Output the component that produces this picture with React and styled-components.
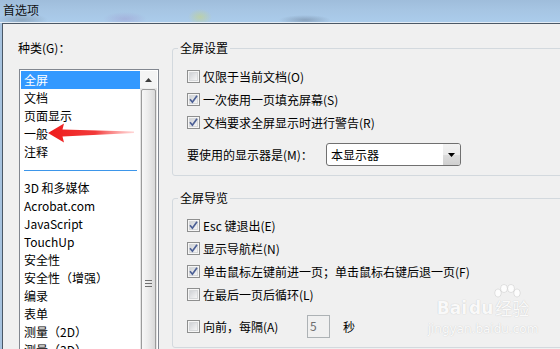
import React from "react";
import styled, { createGlobalStyle } from "styled-components";

const GlobalStyle = createGlobalStyle`
  html, body { margin: 0; padding: 0; }
  body {
    width: 560px; height: 349px; overflow: hidden;
    font-family: "Noto Sans CJK SC", "Microsoft YaHei", sans-serif;
    font-size: 12px; color: #000;
  }
`;

const Window = styled.div`
  position: relative;
  width: 560px;
  height: 349px;
  display: flex;
  flex-direction: column;
  overflow: hidden;
  background: #a7c3df;
`;

const TitleBar = styled.div`
  height: 23px;
  flex-shrink: 0;
  box-sizing: border-box;
  border-bottom: 1px solid #e3ecf5;
  display: flex;
  align-items: center;
  padding: 0 0 3px 3px;
  background:
    radial-gradient(ellipse 26px 7px at 22px 20px, rgba(80, 90, 100, 0.3), transparent),
    radial-gradient(ellipse 22px 7px at 125px 19px, rgba(150, 120, 190, 0.28), transparent),
    radial-gradient(ellipse 12px 8px at 200px 17px, rgba(205, 215, 110, 0.5), transparent),
    radial-gradient(ellipse 26px 5px at 305px 20px, rgba(60, 70, 90, 0.3), transparent),
    linear-gradient(180deg, #9fbddb 0%, #a6c5e3 45%, #abcceb 100%);
`;

const Title = styled.span`
  line-height: 16px;
  font-size: 12px;
  color: #111;
`;

const Client = styled.div`
  flex: 1;
  min-height: 0;
  margin-left: 2px;
  border-top: 1px solid #4b5866;
  border-left: 1px solid #4b5866;
  background: #f0f0f0;
  display: flex;
  gap: 13px;
  padding: 16px 0 0 15px;
  overflow: hidden;
`;

const LeftCol = styled.div`
  width: 141px;
  flex-shrink: 0;
  display: flex;
  flex-direction: column;
`;

const TextLabel = styled.div`
  line-height: 16px;
  height: 16px;
  white-space: nowrap;
`;

const ListBox = styled.div`
  margin: 13px 0 0 1px;
  width: 140px;
  height: 300px;
  flex-shrink: 0;
  box-sizing: border-box;
  border: 1px solid #828790;
  padding: 1px;
  background: #fff;
  display: flex;
  overflow: hidden;
`;

const Items = styled.div`
  flex: 1;
  display: flex;
  flex-direction: column;
`;

const Item = styled.div`
  height: 18px;
  line-height: 18px;
  padding-left: 3px;
  white-space: nowrap;
  flex-shrink: 0;
  background: ${(p) => (p.$selected ? "#3399ff" : "transparent")};
  color: ${(p) => (p.$selected ? "#fff" : "#000")};
`;

const Separator = styled.div`
  height: 18px;
  flex-shrink: 0;
  display: flex;
  align-items: center;
  padding: 0 3px;
  &::after {
    content: "";
    flex: 1;
    height: 1px;
    background: #3d96ea;
  }
`;

const ScrollBar = styled.div`
  width: 17px;
  flex-shrink: 0;
  display: flex;
  flex-direction: column;
  background: linear-gradient(90deg, #e4e4e4, #efefef 40%, #efefef 60%, #e4e4e4);
`;

const ScrollButton = styled.div`
  height: 17px;
  flex-shrink: 0;
  display: flex;
  align-items: center;
  justify-content: center;
  background: #f4f4f4;
`;

const Thumb = styled.div`
  height: 388px;
  flex-shrink: 0;
  margin: 1px 1px 0 1px;
  box-sizing: border-box;
  border: 1px solid #9b9b9b;
  border-radius: 2px;
  background: linear-gradient(90deg, #f7f7f7 0%, #ececec 45%, #d9d9d9 100%);
  display: flex;
  align-items: center;
  justify-content: center;
`;

const Gripper = styled.div`
  width: 7px;
  height: 7px;
  background: repeating-linear-gradient(180deg, #707070 0 1px, transparent 1px 3px);
`;

const RightCol = styled.div`
  width: 420px;
  flex-shrink: 0;
  display: flex;
  flex-direction: column;
  gap: 14px;
`;

const Group = styled.fieldset`
  margin: 0;
  padding: 0;
  border: 1px solid #d3d9de;
  border-radius: 3px;
  min-width: 0;
`;

const Legend = styled.legend`
  margin-left: 5px;
  padding: 0 2px;
  line-height: 16px;
  height: 16px;
`;

const Rows = styled.div`
  display: flex;
  flex-direction: column;
  padding: ${(p) => p.$top}px 0 9px 14px;
`;

const Row = styled.div`
  display: flex;
  align-items: center;
  height: 23px;
  gap: 3px;
  white-space: nowrap;
  margin-top: ${(p) => p.$gap || 0}px;
`;

const RowText = styled.span`
  line-height: 16px;
`;

const CheckWrap = styled.div`
  display: flex;
  align-items: center;
  gap: 3px;
  width: ${(p) => (p.$width ? `${p.$width}px` : "auto")};
  flex-shrink: 0;
`;

const FieldLabel = styled.span`
  width: 136px;
  flex-shrink: 0;
  line-height: 16px;
`;

const Select = styled.div`
  width: 135px;
  height: 23px;
  box-sizing: border-box;
  border: 1px solid #707070;
  border-radius: 3px;
  background: #fff;
  display: flex;
  align-items: center;
  overflow: hidden;
`;

const SelectText = styled.span`
  flex: 1;
  padding-left: 4px;
  line-height: 16px;
`;

const SelectArrow = styled.div`
  width: 17px;
  height: 100%;
  display: flex;
  align-items: center;
  justify-content: center;
  background: linear-gradient(180deg, #f2f2f2 0%, #ebebeb 50%, #dddddd 51%, #cfcfcf 100%);
`;

const NumInput = styled.div`
  width: 23px;
  height: 23px;
  box-sizing: border-box;
  border: 1px solid #adb2b5;
  background: #f0f0f0;
  color: #6d6d6d;
  padding-left: 2px;
  line-height: 20px;
  flex-shrink: 0;
`;

const Unit = styled.span`
  margin-left: 10px;
  line-height: 16px;
`;

const ArrowOverlay = styled.svg`
  position: absolute;
  left: 0;
  top: 0;
  pointer-events: none;
`;

const Watermark = styled.div`
  position: absolute;
  left: 428px;
  top: 284px;
  width: 110px;
  display: flex;
  flex-direction: column;
  align-items: center;
  color: rgba(255, 255, 255, 0.92);
  text-shadow: 0 0 1px rgba(0, 0, 0, 0.15), 0 0 2px rgba(0, 0, 0, 0.06);
  pointer-events: none;
`;

const MarkLogo = styled.div`
  display: flex;
  align-items: flex-end;
  font-family: "DejaVu Sans", sans-serif;
  font-weight: bold;
  font-size: 17px;
  line-height: 20px;
  gap: 2px;
`;

const MarkUrl = styled.div`
  font-family: "DejaVu Sans", sans-serif;
  font-size: 12px;
  line-height: 14px;
  margin-top: 4px;
`;

const CheckBox = ({ checked }) => (
  <svg width="13" height="13" viewBox="0 0 13 13" style={{ flexShrink: 0 }}>
    <defs>
      <linearGradient id="cbg" x1="0" y1="0" x2="1" y2="1">
        <stop offset="0" stopColor="#cdd0d4" />
        <stop offset="1" stopColor="#f8f8f8" />
      </linearGradient>
    </defs>
    <rect x="0.5" y="0.5" width="12" height="12" fill="#f6f6f6" stroke="#8e8f8f" />
    <rect x="2.5" y="2.5" width="8" height="8" fill="url(#cbg)" stroke="#d6d8da" />
    {checked && (
      <path d="M3 6.3 L5.4 9.2 L10 2.8" fill="none" stroke="#4b5f95" strokeWidth="1.7" />
    )}
  </svg>
);

const categories = [
  "全屏", "文档", "页面显示", "一般", "注释", "-",
  "3D 和多媒体", "Acrobat.com", "JavaScript", "TouchUp", "安全性",
  "安全性（增强）", "编录", "表单", "测量（2D）", "测量（3D）",
];

const CheckRow = ({ checked, label, gap }) => (
  <Row $gap={gap}>
    <CheckBox checked={checked} />
    <RowText>{label}</RowText>
  </Row>
);

export default function App() {
  return (
    <>
      <GlobalStyle />
      <Window>
        <TitleBar>
          <Title>首选项</Title>
        </TitleBar>
        <Client>
          <LeftCol>
            <TextLabel>种类(G)：</TextLabel>
            <ListBox>
              <Items>
                {categories.map((c, i) =>
                  c === "-" ? (
                    <Separator key={i} />
                  ) : (
                    <Item key={i} $selected={i === 0}>{c}</Item>
                  )
                )}
              </Items>
              <ScrollBar>
                <ScrollButton>
                  <svg width="7" height="4" viewBox="0 0 7 4">
                    <path d="M3.5 0 L7 4 L0 4 Z" fill="#3c3c3c" />
                  </svg>
                </ScrollButton>
                <Thumb>
                  <Gripper />
                </Thumb>
              </ScrollBar>
            </ListBox>
          </LeftCol>
          <RightCol>
            <Group>
              <Legend>全屏设置</Legend>
              <Rows $top={9}>
                <CheckRow label="仅限于当前文档(O)" />
                <CheckRow checked label="一次使用一页填充屏幕(S)" />
                <CheckRow checked label="文档要求全屏显示时进行警告(R)" />
                <Row $gap={9}>
                  <FieldLabel>要使用的显示器是(M)：</FieldLabel>
                  <Select>
                    <SelectText>本显示器</SelectText>
                    <SelectArrow>
                      <svg width="7" height="4" viewBox="0 0 7 4">
                        <path d="M0 0 L7 0 L3.5 4 Z" fill="#000" />
                      </svg>
                    </SelectArrow>
                  </Select>
                </Row>
              </Rows>
            </Group>
            <Group>
              <Legend>全屏导览</Legend>
              <Rows $top={8}>
                <CheckRow checked label="Esc 键退出(E)" />
                <CheckRow checked label="显示导航栏(N)" />
                <CheckRow checked label="单击鼠标左键前进一页；单击鼠标右键后退一页(F)" />
                <CheckRow label="在最后一页后循环(L)" />
                <Row $gap={9}>
                  <CheckWrap $width={117}>
                    <CheckBox />
                    <RowText>向前，每隔(A)</RowText>
                  </CheckWrap>
                  <NumInput>5</NumInput>
                  <Unit>秒</Unit>
                </Row>
              </Rows>
            </Group>
          </RightCol>
        </Client>
        <ArrowOverlay width="160" height="160" viewBox="0 0 160 160">
          <defs>
            <linearGradient id="arrowGrad" x1="0" y1="0" x2="1" y2="0">
              <stop offset="0" stopColor="#ee1c1c" />
              <stop offset="0.55" stopColor="#f23a3a" />
              <stop offset="1" stopColor="#ff8a8a" stopOpacity="0.35" />
            </linearGradient>
          </defs>
          <path
            d="M48 133 L64 123.5 L62.5 129.5 L134 131.5 L134 133 L62.5 136.5 L64 142.5 Z"
            fill="url(#arrowGrad)"
          />
        </ArrowOverlay>
        <Watermark>
          <svg width="30" height="14" viewBox="0 0 30 14" style={{ marginLeft: 48 }}>
            <g fill="rgba(255,255,255,0.85)" stroke="rgba(0,0,0,0.12)" strokeWidth="0.8">
              <ellipse cx="6" cy="9" rx="3.2" ry="4" />
              <ellipse cx="12" cy="4.5" rx="3.4" ry="4" />
              <ellipse cx="19" cy="4.5" rx="3.4" ry="4" />
              <ellipse cx="25" cy="9" rx="3.2" ry="4" />
            </g>
          </svg>
          <MarkLogo>
            <span>Bai</span>
            <span>du</span>
            <span style={{ fontFamily: '"Noto Sans CJK SC", sans-serif', fontWeight: 400 }}>经验</span>
          </MarkLogo>
          <MarkUrl>jingyan.baidu.com</MarkUrl>
        </Watermark>
      </Window>
    </>
  );
}
